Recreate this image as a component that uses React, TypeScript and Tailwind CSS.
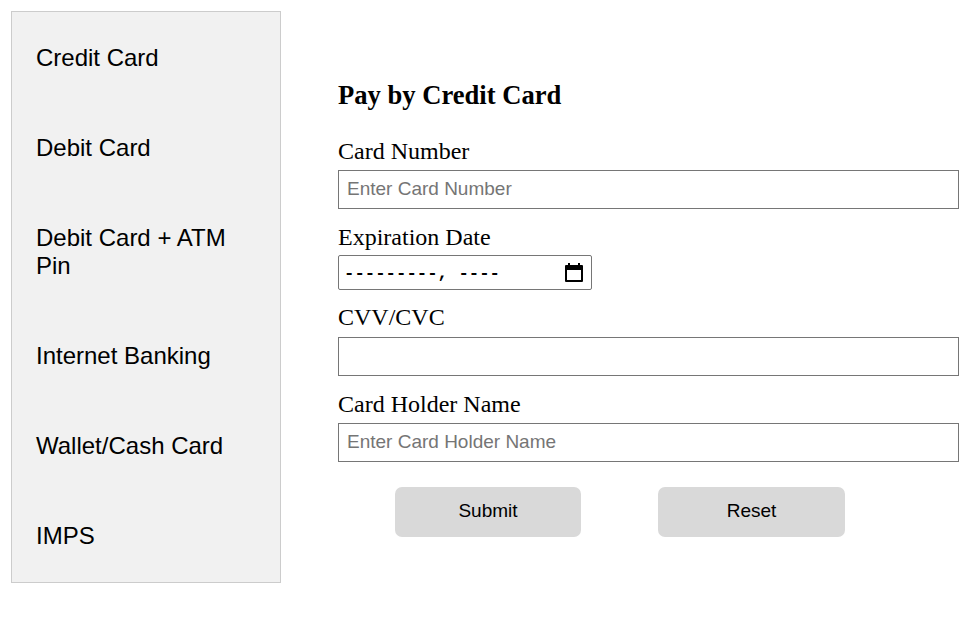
const methods = ['Credit Card', 'Debit Card', 'Debit Card + ATM Pin', 'Internet Banking', 'Wallet/Cash Card', 'IMPS']

const labelClass = "block text-[24px] leading-[27px] [font-family:'Liberation_Serif',serif] text-black"
const inputClass = "block w-full h-[39px] border border-[#767676] bg-white px-2 pb-[2px] text-[19px] [font-family:'Liberation_Sans',sans-serif] placeholder:text-[#757575] outline-none"

const CalendarIcon = () => (
    <svg width="18" height="19" viewBox="0 0 18 19" fill="none" className="shrink-0">
        <path d="M3 0h2v2h8V0h2v2h2a1 1 0 0 1 1 1v15a1 1 0 0 1-1 1H1a1 1 0 0 1-1-1V3a1 1 0 0 1 1-1h2z" fill="#000" />
        <rect x="2" y="7" width="14" height="10" fill="#fff" />
    </svg>
)

export default function App() {
    return (
        <div className="flex w-[980px] h-[626px] bg-white pl-[11px] pt-[11px] pr-[21px] overflow-hidden">
            <ul className="w-[270px] h-[572px] shrink-0 border border-[#cccccc] bg-[#f1f1f1] pt-[32px] px-6 overflow-hidden [font-family:'Liberation_Sans',sans-serif] text-[24px] leading-[28px] text-black">
                {methods.map((m) => (
                    <li key={m} className="pb-[62px] w-[200px]">{m}</li>
                ))}
            </ul>
            <div className="ml-[57px] flex-1 pt-[68px]">
                <h3 className="text-[26.6px] leading-[32px] font-bold [font-family:'Liberation_Serif',serif] text-black">Pay by Credit Card</h3>
                <form className="mt-[27px]">
                    <label className={labelClass}>Card Number</label>
                    <input className={`${inputClass} mt-[5px]`} placeholder="Enter Card Number" />
                    <label className={`${labelClass} mt-[15px]`}>Expiration Date</label>
                    <div className="flex items-center justify-between mt-[4px] w-[254px] h-[35px] border border-[#767676] rounded-[2px] bg-white pl-[5px] pr-[8px] text-[17.33px] font-bold [font-family:'Liberation_Mono',monospace] text-black">
                        <span className="pt-[2px]">---------, ----</span>
                        <CalendarIcon />
                    </div>
                    <label className={`${labelClass} mt-[14px]`}>CVV/CVC</label>
                    <input className={`${inputClass} mt-[6px]`} />
                    <label className={`${labelClass} mt-[15px]`}>Card Holder Name</label>
                    <input className={`${inputClass} mt-[5px]`} placeholder="Enter Card Holder Name" />
                    <div className="flex mt-[25px] ml-[57px] gap-[77px] [font-family:'Liberation_Sans',sans-serif] text-[19px] text-black">
                        <button type="button" className="w-[186px] h-[50px] pb-[2px] rounded-[7px] bg-[#d9d9d9]">Submit</button>
                        <button type="button" className="w-[187px] h-[50px] pb-[2px] rounded-[7px] bg-[#d9d9d9]">Reset</button>
                    </div>
                </form>
            </div>
        </div>
    )
}
